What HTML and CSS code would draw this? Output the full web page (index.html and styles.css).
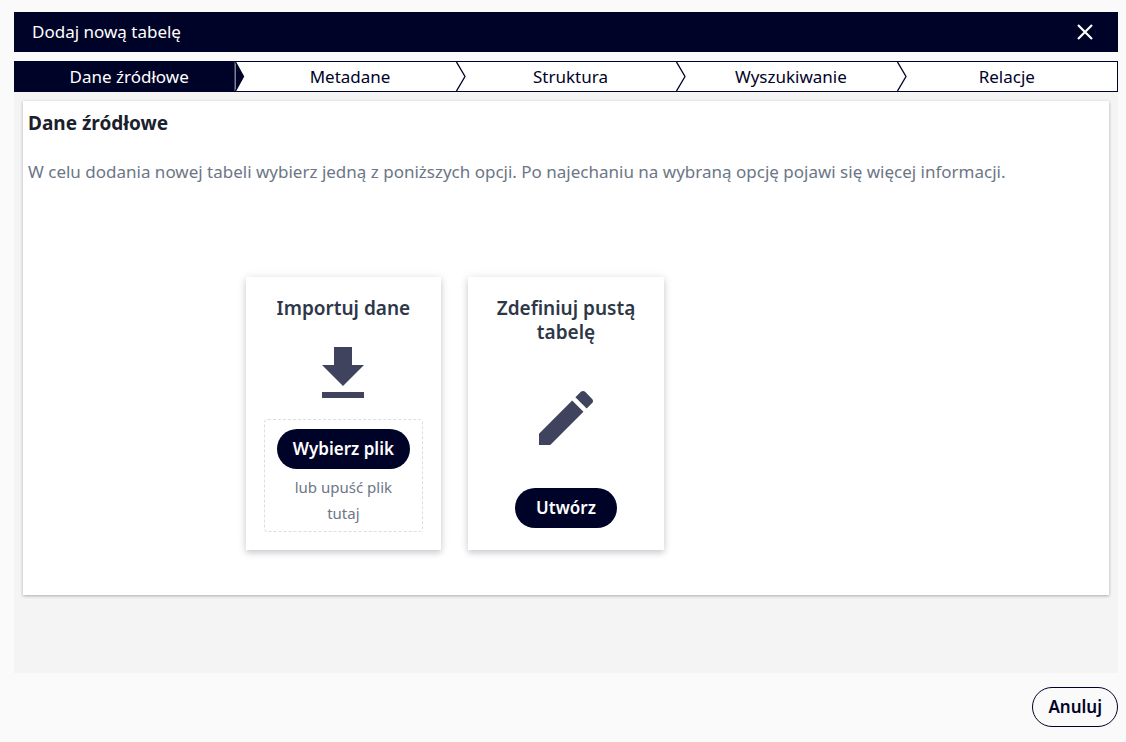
FILE: index.html
```
<!DOCTYPE html>
<html lang="pl">
<head>
  <meta charset="UTF-8">
  <meta name="viewport" content="width=device-width, initial-scale=1.0">
  <title>Dodaj nową tabelę</title>
  <link rel="stylesheet" href="styles.css">
</head>
<body>
<header class="topbar">
  <h1>Dodaj nową tabelę</h1>
  <button class="close-btn" type="button" aria-label="Zamknij">
    <svg width="16" height="16" viewBox="0 0 16 16"><path d="M1 1L15 15M15 1L1 15" fill="none" stroke="currentColor" stroke-width="2.2"/></svg>
  </button>
</header>

<ol class="steps">
  <li class="step active">Dane źródłowe
    <svg class="arrow" width="10" height="29" viewBox="0 0 10 29"><path d="M0.5 0L8.5 14.5L0.5 29"/></svg>
  </li>
  <li class="step">Metadane
    <svg class="arrow" width="10" height="29" viewBox="0 0 10 29"><path d="M0.5 0L9 14.5L0.5 29"/></svg>
  </li>
  <li class="step">Struktura
    <svg class="arrow" width="10" height="29" viewBox="0 0 10 29"><path d="M0.5 0L9 14.5L0.5 29"/></svg>
  </li>
  <li class="step">Wyszukiwanie
    <svg class="arrow" width="10" height="29" viewBox="0 0 10 29"><path d="M0.5 0L9 14.5L0.5 29"/></svg>
  </li>
  <li class="step">Relacje</li>
</ol>

<main>
  <section class="panel">
    <h2>Dane źródłowe</h2>
    <p class="intro">W celu dodania nowej tabeli wybierz jedną z poniższych opcji. Po najechaniu na wybraną opcję pojawi się więcej informacji.</p>
    <div class="options">
      <div class="card import">
        <h3>Importuj dane</h3>
        <svg class="icon" width="72" height="72" viewBox="0 0 24 24"><path d="M19 9h-4V3H9v6H5l7 7 7-7zM5 18v2h14v-2H5z"/></svg>
        <div class="dropzone">
          <button class="btn" type="button">Wybierz plik</button>
          <p>lub upuść plik tutaj</p>
        </div>
      </div>
      <div class="card">
        <h3>Zdefiniuj pustą tabelę</h3>
        <svg class="icon" width="72" height="72" viewBox="0 0 24 24"><path d="M3 17.25V21h3.75L17.81 9.94l-3.75-3.75L3 17.25zM20.71 7.04c.39-.39.39-1.02 0-1.41l-2.34-2.34c-.39-.39-1.02-.39-1.41 0l-1.83 1.83 3.75 3.75 1.83-1.83z"/></svg>
        <button class="btn" type="button">Utwórz</button>
      </div>
    </div>
  </section>
</main>

<footer>
  <button class="btn outline" type="button">Anuluj</button>
</footer>
</body>
</html>
```
FILE: styles.css
```
:root{
  --primary:#000328;
  --bg:#fafafa;
  --body:#f4f4f4;
  --muted:#6c7686;
  --icon:#40435e;
}
*{box-sizing:border-box;margin:0;padding:0;font-family:"Noto Sans","Open Sans",sans-serif;}
body{background:var(--bg);color:var(--primary);min-height:100vh;display:flex;flex-direction:column;padding:12px 8px 15px 14px;font-size:17px;line-height:24px}
button{border:none;background:none;font-size:17px;line-height:24px;cursor:pointer}
svg{display:block}

.topbar{background:var(--primary);color:#fff;height:40px;padding:0 23px 0 18px;display:flex;align-items:center;justify-content:space-between}
.topbar h1{font-size:17px;font-weight:400}
.close-btn{color:#fff;padding:2px}

/* wizard steps */
.steps{list-style:none;display:flex;margin-top:9px;background:#fff;border:1px solid var(--primary)}
.step{width:20%;position:relative;height:29px;line-height:29px;padding-left:9px;text-align:center}
.step:last-child{padding-left:0}
.step.active{background:var(--primary);color:#fff;border-right:1px solid #40435e}
.arrow{position:absolute;top:0;left:100%;fill:#fff;stroke:var(--primary);stroke-width:1.3;z-index:1}
.active .arrow{fill:var(--primary);margin-left:1px}

main{flex:1;background:var(--body);padding:9px;margin-bottom:14px}
.panel{background:#fff;padding-bottom:45px;box-shadow:0 1px 3px rgba(0,3,40,.3)}
.panel h2{font-size:19px;line-height:24px;font-weight:700;color:#1a202c;padding:10px 5px 0}
.intro{color:var(--muted);padding:25px 5px 0}

.options{display:grid;grid-template-columns:repeat(5,1fr);gap:27px;margin-top:93px}
.card{background:#fff;height:273px;padding:19px 18px 22px;display:flex;flex-direction:column;align-items:center;text-align:center;box-shadow:0 3px 6px rgba(45,55,72,.22),0 0 10px rgba(45,55,72,.08)}
.card h3{font-size:19px;line-height:24px;font-weight:600;color:#2d3748}
.card.import{grid-column:2;padding-bottom:18px}
.icon{fill:var(--icon);margin:38px 0 auto}
.import .icon{margin-top:18px}
.dropzone{width:100%;border:1px dashed #ddd;border-radius:4px;padding:9px 12px 5px}
.dropzone p{font-size:15px;line-height:26px;color:var(--muted);padding:5px 12px 0}

.btn{height:40px;background:var(--primary);color:#fff;font-weight:600;border-radius:20px;padding:0 21px;white-space:nowrap}
.dropzone .btn{padding:0 16px}
.btn.outline{background:none;color:var(--primary);border:1px solid var(--primary);padding:0 15px}
footer{display:flex;justify-content:flex-end}
```
